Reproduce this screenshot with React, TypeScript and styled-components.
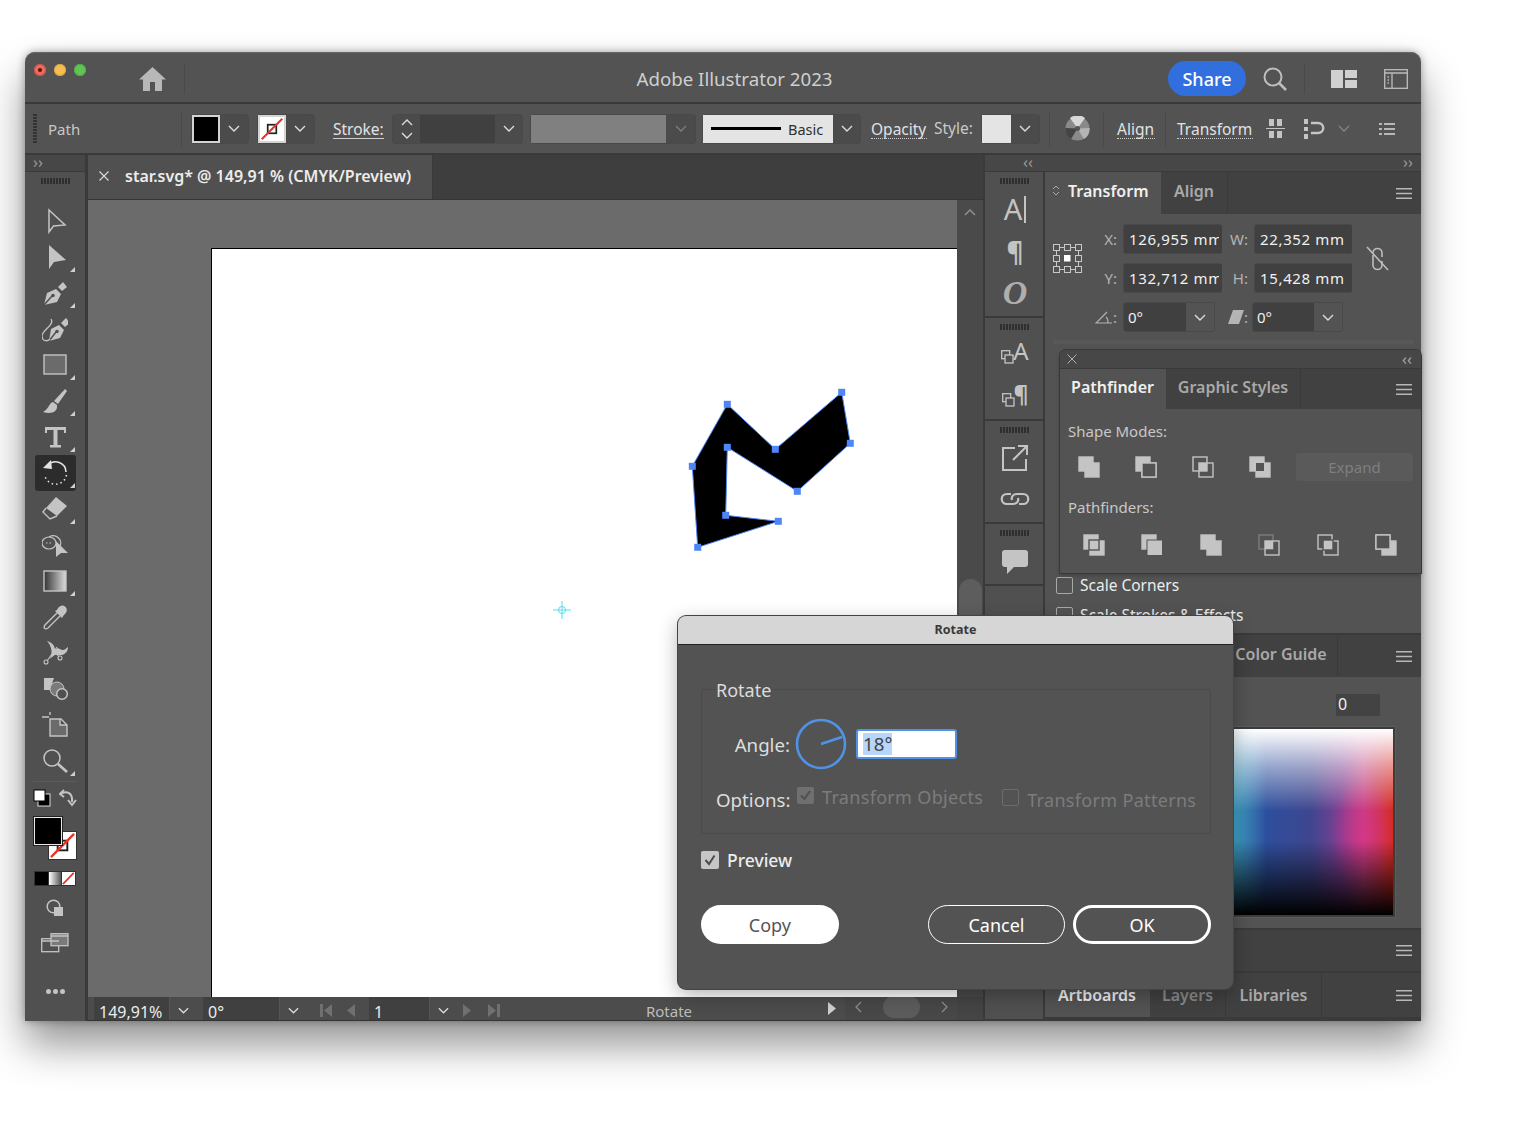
import * as React from "react";
import styled, { createGlobalStyle, css } from "styled-components";

const ICON = "#c4c4c4";
const PANEL = "#535353";
const DARK = "#414141";
const LINE = "#3a3a3a";
const FIELD = "#404040";

const GlobalStyle = createGlobalStyle`
  html, body {
    margin: 0;
    background: #fff;
    overflow: hidden;
  }
  body {
    font-family: "Noto Sans", "Open Sans", sans-serif;
    color: #e6e6e6;
  }
  * {
    box-sizing: border-box;
  }
`;

const Page = styled.div`
  width: 1523px;
  height: 1129px;
  padding: 52px 0 0 25px;
`;

const Window = styled.div`
  position: relative;
  width: 1396px;
  height: 969px;
  display: flex;
  flex-direction: column;
  background: ${PANEL};
  border-radius: 10px 10px 0 0;
  box-shadow: 0 24px 42px rgba(0, 0, 0, 0.42), 0 0 8px rgba(0, 0, 0, 0.35);
`;

const spacing = css<{ $ml?: number; $w?: number }>`
  margin-left: ${(p) => p.$ml ?? 0}px;
  ${(p) => (p.$w ? `width: ${p.$w}px;` : "")}
  flex: none;
`;

/* title bar */
const TitleBar = styled.header`
  height: 52px;
  flex: none;
  display: flex;
  align-items: center;
  padding: 3px 13px 0 9px;
  border-bottom: 2px solid ${LINE};
  border-radius: 10px 10px 0 0;
  box-shadow: inset 0 1px 0 #666;
`;

const Lights = styled.div`
  display: flex;
  gap: 8px;
  align-self: flex-start;
  margin-top: 9px;
`;

const Light = styled.span<{ $color: string; $edge: string }>`
  width: 12px;
  height: 12px;
  border-radius: 50%;
  background: ${(p) => p.$color};
  box-shadow: inset 0 0 0 1px ${(p) => p.$edge};
  display: flex;
  align-items: center;
  justify-content: center;
`;

const LightDot = styled.span`
  width: 4px;
  height: 4px;
  border-radius: 50%;
  background: #5d0f0c;
`;

const BarDivider = styled.span<{ $ml?: number; $h?: number }>`
  margin-left: ${(p) => p.$ml ?? 0}px;
  width: 1px;
  height: ${(p) => p.$h ?? 30}px;
  flex: none;
  background: #4a4a4a;
`;

const AppTitle = styled.h1`
  flex: 1;
  margin: 0;
  padding-left: 116px;
  text-align: center;
  font-size: 18.7px;
  font-weight: 400;
  color: #cfcfcf;
  white-space: nowrap;
`;

const ShareButton = styled.button`
  width: 78px;
  height: 35px;
  flex: none;
  border: 0;
  border-radius: 18px;
  background: #316fdf;
  color: #fff;
  font: 500 18px "Noto Sans", sans-serif;
  padding: 0;
`;

const IconSlot = styled.span<{ $ml?: number; $w?: number }>`
  ${spacing}
  display: flex;
  align-items: center;
  justify-content: center;
`;

/* control bar */
const ControlBar = styled.div`
  height: 51px;
  flex: none;
  display: flex;
  align-items: center;
  padding-left: 8px;
  border-bottom: 2px solid ${LINE};
  font-size: 15.5px;
`;

const Grip = styled.span`
  width: 4px;
  height: 30px;
  flex: none;
  background: repeating-linear-gradient(to bottom, #333 0 2px, transparent 2px 3px);
`;

const PathLabel = styled.span`
  margin-left: 11px;
  width: 133px;
  flex: none;
  font-size: 15px;
  color: #c8c8c8;
`;

const Combo = styled.div<{ $ml?: number; $w?: number }>`
  ${spacing}
  height: 28px;
  display: flex;
  align-items: stretch;
  background: #4b4b4b;
  box-shadow: 0 0 0 1px #494949;
  border-radius: 3px;
`;

const Swatch = styled.span`
  width: 28px;
  flex: none;
  display: flex;
  background: #000;
  border: 2px solid #d4d4d4;
`;

const Caret = styled.span<{ $w?: number; $dim?: boolean }>`
  width: ${(p) => p.$w ?? 28}px;
  flex: none;
  display: flex;
  align-items: center;
  justify-content: center;
  opacity: ${(p) => (p.$dim ? 0.35 : 1)};
`;

const Stepper = styled.span`
  width: 27px;
  flex: none;
  display: flex;
  flex-direction: column;
  align-items: center;
  justify-content: center;
  gap: 6px;
`;

const DarkInput = styled.span<{ $w: number }>`
  width: ${(p) => p.$w}px;
  flex: none;
  background: ${FIELD};
`;

const GrayFill = styled.span`
  width: 135px;
  flex: none;
  background: #808080;
`;

const StrokePreview = styled.span`
  width: 130px;
  flex: none;
  display: flex;
  align-items: center;
  gap: 7px;
  padding-left: 8px;
  background: #e4e4e4;
  color: #2f2f2f;
  font-size: 14.5px;
`;

const StrokeLine = styled.span`
  width: 70px;
  height: 3px;
  flex: none;
  background: #000;
`;

const StyleSwatch = styled.span`
  width: 29px;
  flex: none;
  background: #e4e4e4;
`;

const ControlLink = styled.span<{ $ml?: number; $w?: number; $solid?: boolean; $plain?: boolean }>`
  ${spacing}
  white-space: nowrap;
  color: #e2e2e2;
  line-height: 17px;
  margin-top: ${(p) => (p.$plain ? 0 : 3)}px;
  ${(p) =>
    p.$plain
      ? "color: #c8c8c8;"
      : `border-bottom: ${p.$solid ? "1px solid #d0d0d0" : "1px dotted #d0d0d0"};`}
`;

/* work area */
const WorkArea = styled.div`
  flex: 1;
  min-height: 0;
  display: flex;
  background: ${LINE};
`;

const ToolColumn = styled.aside`
  width: 60px;
  flex: none;
  margin-right: 3px;
  display: flex;
  flex-direction: column;
  align-items: center;
  background: #505050;
`;

const CollapseStrip = styled.div`
  align-self: stretch;
  height: 17px;
  display: flex;
  align-items: center;
  padding: 0 8px 2px;
  background: #474747;
  color: #9a9a9a;
  font-size: 16px;
  border-bottom: 1px solid ${LINE};
`;

const Knurl = styled.span<{ $mt?: number }>`
  display: block;
  width: 29px;
  height: 6px;
  margin-top: ${(p) => p.$mt ?? 6}px;
  flex: none;
  background: repeating-linear-gradient(to right, #2f2f2f 0 2px, transparent 2px 3px);
`;

const Tools = styled.div`
  margin-top: 19px;
  display: flex;
  flex-direction: column;
`;

const ToolButton = styled.div<{ $active?: boolean; $corner?: boolean }>`
  position: relative;
  width: 41px;
  height: 36px;
  display: flex;
  align-items: center;
  justify-content: center;
  border-radius: 3px;
  ${(p) => (p.$active ? "background: #2c2c2c;" : "")}
  ${(p) =>
    p.$corner
      ? `&::after {
          content: "";
          position: absolute;
          right: 1px;
          bottom: 3px;
          border-style: solid;
          border-width: 0 0 5px 5px;
          border-color: transparent transparent #d0d0d0 transparent;
        }`
      : ""}
`;

const ToolRule = styled.span`
  width: 44px;
  height: 1px;
  margin-top: 2px;
  flex: none;
  background: #5b5b5b;
`;

const SwapRow = styled.div`
  width: 44px;
  height: 20px;
  margin-top: 6px;
  display: flex;
  align-items: center;
  justify-content: space-between;
`;

const FillStroke = styled.div`
  position: relative;
  width: 43px;
  height: 43px;
  margin-top: 9px;
  flex: none;
`;

const StrokeBox = styled.span`
  position: absolute;
  right: 0;
  bottom: 0;
  width: 29px;
  height: 29px;
  display: flex;
  border: 1px solid #333;
`;

const FillBox = styled.span`
  position: absolute;
  left: 0;
  top: 0;
  width: 28px;
  height: 28px;
  background: #000;
  border: 1px solid #e8e8e8;
  box-shadow: 0 0 0 1px #222;
`;

const ModeRow = styled.div`
  width: 42px;
  height: 15px;
  margin-top: 11px;
  flex: none;
  display: flex;
  gap: 1px;
  padding: 1px;
  background: #333;
`;

const ModeCell = styled.span<{ $fill: string }>`
  flex: 1;
  display: flex;
  background: ${(p) => p.$fill};
`;

const BottomIcon = styled.span<{ $mt: number }>`
  margin-top: ${(p) => p.$mt}px;
  display: flex;
  flex: none;
`;

const Dots = styled.span`
  margin-top: 36px;
  display: flex;
  gap: 2px;
  flex: none;
`;

const Dot = styled.i`
  width: 5px;
  height: 5px;
  border-radius: 50%;
  background: ${ICON};
`;

/* document */
const DocumentArea = styled.main`
  width: 895px;
  flex: none;
  margin-right: 2px;
  display: flex;
  flex-direction: column;
`;

const DocTabs = styled.div`
  height: 45px;
  flex: none;
  display: flex;
  background: #3e3e3e;
  border-bottom: 1px solid #363636;
`;

const DocTab = styled.div`
  width: 345px;
  display: flex;
  align-items: center;
  gap: 16px;
  padding: 0 0 2px 11px;
  background: #505050;
  border-right: 1px solid #3a3a3a;
  font-size: 16px;
  font-weight: 600;
  color: #ececec;
  white-space: nowrap;
`;

const CanvasRow = styled.div`
  flex: 1;
  min-height: 0;
  display: flex;
`;

const Pasteboard = styled.div`
  flex: 1;
  display: flex;
  padding: 48px 0 0 123px;
  background: #6b6b6b;
`;

const Artboard = styled.div`
  position: relative;
  flex: 1;
  background: #fff;
  border-top: 1px solid #000;
  border-left: 1px solid #000;
`;

const ArtLayer = styled.svg`
  position: absolute;
  left: 0;
  top: -1px;
`;

const VScroll = styled.div`
  width: 26px;
  flex: none;
  display: flex;
  flex-direction: column;
  align-items: center;
  padding-top: 9px;
  background: #4a4a4a;
`;

const VThumb = styled.span`
  width: 23px;
  height: 60px;
  margin-top: 363px;
  border-radius: 12px;
  background: #5d5d5d;
`;

const StatusBar = styled.footer`
  height: 24px;
  flex: none;
  display: flex;
  align-items: stretch;
  padding-left: 6px;
  background: #4c4c4c;
  border-bottom: 1px solid #333;
  font-size: 16px;
  color: #ececec;
`;

const StatusField = styled.span<{ $w: number; $ml?: number }>`
  width: ${(p) => p.$w}px;
  margin-left: ${(p) => p.$ml ?? 0}px;
  flex: none;
  padding: 5px 0 0 5px;
  line-height: 20px;
  background: ${FIELD};
  white-space: nowrap;
`;

const StatusCaret = styled.span`
  width: 27px;
  flex: none;
  display: flex;
  align-items: center;
  justify-content: center;
  padding-top: 4px;
  border-left: 1px solid #555;
`;

const NavIcons = styled.span<{ $w: number }>`
  width: ${(p) => p.$w}px;
  flex: none;
  display: flex;
  align-items: center;
  justify-content: center;
  padding-top: 3px;
`;

const StatusLabel = styled.span`
  width: 298px;
  flex: none;
  padding: 4px 0 0 0;
  line-height: 20px;
  margin-left: 13px;
  text-align: center;
  color: #bdbdbd;
  font-size: 15px;
`;

const PlayBox = styled.span`
  width: 27px;
  flex: none;
  display: flex;
  align-items: center;
  justify-content: center;
`;

const HScroll = styled.span`
  width: 112px;
  flex: none;
  display: flex;
  align-items: center;
  justify-content: space-between;
  padding: 0 9px 4px 10px;
  background: #484848;
`;

const HThumb = styled.span`
  width: 37px;
  height: 22px;
  border-radius: 11px;
  background: #5c5c5c;
`;

const Corner = styled.span`
  flex: 1;
  background: #454545;
`;

/* right dock */
const RightDock = styled.aside`
  flex: 1;
  display: flex;
  flex-direction: column;
  min-width: 0;
`;

const DockStrip = styled.div`
  height: 17px;
  flex: none;
  display: flex;
  justify-content: space-between;
  align-items: center;
  padding: 0 8px 2px 38px;
  background: #474747;
  color: #9a9a9a;
  font-size: 16px;
  border-bottom: 1px solid ${LINE};
`;

const DockBody = styled.div`
  flex: 1;
  min-height: 0;
  display: flex;
  gap: 2px;
`;

const DockIcons = styled.div`
  width: 58px;
  flex: none;
  display: flex;
  flex-direction: column;
  background: #505050;
`;

const DockGroup = styled.div<{ $h?: number }>`
  height: ${(p) => (p.$h ? `${p.$h}px` : "auto")};
  ${(p) => (p.$h ? "" : "flex: 1;")}
  display: flex;
  flex-direction: column;
  align-items: center;
  border-bottom: 2px solid ${LINE};
`;

const DockIcon = styled.span<{ $mt: number }>`
  margin: ${(p) => p.$mt}px 0 0 2px;
  height: 30px;
  display: flex;
  align-items: center;
  justify-content: center;
  flex: none;
`;

const DockGlyph = styled.span<{ $size: number; $serif?: boolean; $bold?: boolean }>`
  font-family: ${(p) => (p.$serif ? '"Liberation Serif", serif' : '"Noto Sans", sans-serif')};
  font-size: ${(p) => p.$size}px;
  font-style: ${(p) => (p.$serif ? "italic" : "normal")};
  font-weight: ${(p) => (p.$bold ? 700 : 400)};
  line-height: 30px;
  color: ${(p) => (p.$serif ? "#aeaeae" : ICON)};
`;

const TextCursor = styled.span`
  width: 2px;
  height: 27px;
  margin-left: 2px;
  flex: none;
  background: ${ICON};
`;

const MiniSquares = styled.svg`
  margin: 11px -1px 0 0;
  flex: none;
`;

const PanelColumn = styled.div`
  flex: 1;
  min-width: 0;
  display: flex;
  flex-direction: column;
  gap: 2px;
`;

const Panel = styled.section<{ $h: number }>`
  height: ${(p) => p.$h}px;
  flex: none;
  display: flex;
  flex-direction: column;
  background: ${PANEL};
  overflow: hidden;
`;

const TabRow = styled.div<{ $h?: number }>`
  height: ${(p) => p.$h ?? 42}px;
  flex: none;
  display: flex;
  align-items: stretch;
  background: ${DARK};
`;

const Tab = styled.div<{ $active?: boolean; $w: number; $dim?: boolean; $pl?: number; $pb?: number }>`
  width: ${(p) => p.$w}px;
  flex: none;
  display: flex;
  align-items: center;
  justify-content: ${(p) => (p.$pl !== undefined ? "flex-start" : "center")};
  padding-left: ${(p) => p.$pl ?? 0}px;
  padding-bottom: ${(p) => p.$pb ?? 5}px;
  gap: 8px;
  font-size: 16px;
  font-weight: 600;
  white-space: nowrap;
  color: ${(p) => (p.$active ? "#f0f0f0" : p.$dim ? "#8c8c8c" : "#a9a9a9")};
  background: ${(p) => (p.$active ? PANEL : DARK)};
  border-right: 1px solid ${(p) => (p.$active ? "transparent" : "#3a3a3a")};
`;

const MenuSlot = styled.span`
  margin-left: auto;
  width: 25px;
  flex: none;
  display: flex;
  align-items: center;
  justify-content: flex-start;
`;

const TransformGrid = styled.div`
  display: grid;
  grid-template-columns: 29px 29px 99px 20px 98px 31px;
  grid-template-rows: 30px 30px 30px;
  column-gap: 6px;
  row-gap: 9px;
  padding: 10px 0 0 8px;
  font-size: 15px;
`;

const RefSlot = styled.span`
  grid-row: 1 / 3;
  align-self: center;
  display: flex;
`;

const LinkSlot = styled.span`
  grid-row: 1 / 3;
  grid-column: 6;
  align-self: center;
  justify-self: end;
  display: flex;
`;

const FieldLabel = styled.span`
  align-self: center;
  justify-self: end;
  color: #b4b4b4;
  display: flex;
  align-items: center;
  white-space: nowrap;
`;

const ValueField = styled.span`
  display: flex;
  align-items: center;
  padding: 0 0 0 5px;
  overflow: hidden;
  white-space: nowrap;
  background: ${FIELD};
  border: 1px solid #494949;
  border-right: 3px solid ${FIELD};
  border-radius: 3px;
  color: #f0f0f0;
  letter-spacing: 0.65px;
`;

const AngleField = styled.span<{ $w: number; $ml?: number }>`
  display: flex;
  width: ${(p) => p.$w}px;
  margin-left: ${(p) => p.$ml ?? 0}px;
  border: 1px solid #494949;
  border-radius: 3px;
  overflow: hidden;
  color: #f0f0f0;
`;

const AngleValue = styled.span`
  flex: 1;
  display: flex;
  align-items: center;
  padding-left: 4px;
  background: ${FIELD};
`;

const PanelBand = styled.div`
  height: 4px;
  margin: 8px 8px 0;
  background: #585858;
`;

const ScaleOptions = styled.div`
  margin-top: auto;
  height: 46px;
  flex: none;
  display: flex;
  flex-direction: column;
  gap: 13px;
  padding: 1px 0 0 11px;
  overflow: hidden;
  font-size: 15.5px;
`;

const TransformBody = styled.div`
  height: 408px;
  flex: none;
  display: flex;
  flex-direction: column;
`;

const CheckRow = styled.label`
  height: 17px;
  flex: none;
  display: flex;
  align-items: center;
  gap: 7px;
  line-height: 17px;
  color: #ececec;
  white-space: nowrap;
`;

const EmptyBox = styled.span`
  width: 17px;
  height: 17px;
  flex: none;
  border: 1px solid #a8a8a8;
  border-radius: 2px;
`;

/* pathfinder */
const Floating = styled.section`
  position: absolute;
  left: 1035px;
  top: 298px;
  width: 361px;
  height: 223px;
  display: flex;
  flex-direction: column;
  background: ${PANEL};
  border-radius: 6px 6px 0 0;
  box-shadow: 0 0 0 1px #383838, 0 2px 4px rgba(0, 0, 0, 0.25);
`;

const FloatHead = styled.div`
  height: 19px;
  flex: none;
  display: flex;
  align-items: center;
  justify-content: space-between;
  padding: 0 9px 0 7px;
  color: #a6a6a6;
  font-size: 16px;
  background: #474747;
  border-radius: 6px 6px 0 0;
  border-bottom: 1px solid ${LINE};
`;

const SectionLabel = styled.div<{ $mt: number }>`
  margin: ${(p) => p.$mt}px 0 0 8px;
  height: 20px;
  line-height: 20px;
  font-size: 15px;
  color: #c8c8c8;
`;

const ModeIcons = styled.div`
  margin-top: 12px;
  height: 28px;
  display: flex;
  align-items: center;
  padding: 0 8px 0 18px;
`;

const ModeGroup = styled.div`
  display: flex;
  gap: 35px;
`;

const ExpandButton = styled.span`
  margin-left: auto;
  width: 117px;
  height: 28px;
  display: flex;
  align-items: center;
  justify-content: center;
  border-radius: 3px;
  background: #5a5a5a;
  color: #7f7f7f;
  font-size: 15px;
`;

const FinderIcons = styled.div`
  margin-top: 17px;
  display: flex;
  padding-left: 23px;
  gap: 36.4px;
`;

/* colour panel */
const ColorBody = styled.div`
  flex: 1;
  position: relative;
  display: flex;
  flex-direction: column;
  align-items: flex-end;
  padding: 17px 26px 0 0;
`;

const ZeroField = styled.span`
  width: 44px;
  height: 22px;
  margin-right: 15px;
  padding: 0 0 3px 2px;
  display: flex;
  align-items: center;
  background: #434343;
  font-size: 16px;
  color: #f0f0f0;
`;

const Spectrum = styled.div`
  width: 190px;
  height: 190px;
  margin-top: 11px;
  flex: none;
  border: 2px solid #3c3c3c;
  outline: 1px solid #5c5c5c;
  background:
    linear-gradient(to bottom, #fff 0%, rgba(255, 255, 255, 0.5) 20%, rgba(255, 255, 255, 0) 44%, rgba(0, 0, 0, 0) 60%, #000 100%),
    radial-gradient(ellipse 34px 56px at 84% 56%, rgba(224, 48, 140, 0.65), transparent),
    linear-gradient(to right, #3fa8c8 13%, #2d4f9d 32%, #40468f 56%, #7c3f92 72%, #c0417f 84%, #d62a1c 100%);
`;

/* dialog */
const Dialog = styled.section`
  position: absolute;
  left: 653px;
  top: 564px;
  width: 555px;
  height: 373px;
  display: flex;
  flex-direction: column;
  background: ${PANEL};
  border-radius: 8px;
  box-shadow: 0 0 0 1px #444, 0 6px 20px rgba(0, 0, 0, 0.3);
`;

const DialogTitle = styled.header`
  height: 29px;
  flex: none;
  display: flex;
  align-items: center;
  justify-content: center;
  padding-bottom: 2px;
  background: #d6d6d6;
  border-radius: 8px 8px 0 0;
  border-bottom: 1px solid #222;
  color: #3a3a3a;
  font-size: 12.5px;
  font-weight: 700;
`;

const DialogBody = styled.div`
  flex: 1;
  display: flex;
  flex-direction: column;
  padding: 33px 22px 0 23px;
`;

const Fieldset = styled.fieldset`
  margin: 0;
  padding: 0 0 0 14px;
  height: 156px;
  flex: none;
  border: 1px solid #4b4b4b;
  border-radius: 3px;
`;

const Legend = styled.legend`
  padding: 2px 0 0 0;
  margin-left: 0;
  font-size: 18px;
  line-height: 20px;
  color: #dcdcdc;
`;

const AngleRow = styled.div`
  margin-top: 18px;
  height: 52px;
  display: flex;
  align-items: center;
  font-size: 18.7px;
`;

const DialLabel = styled.span`
  width: 74px;
  flex: none;
  text-align: right;
  color: #dedede;
`;

const Dial = styled.svg`
  margin-left: 5px;
  flex: none;
`;

const AngleInput = styled.span`
  margin-left: 9px;
  width: 101px;
  height: 30px;
  display: flex;
  align-items: center;
  padding-left: 5px;
  background: #fff;
  border: 2px solid #5092e6;
  border-radius: 3px;
  color: #444;
`;

const Selected = styled.span`
  background: #b7d6fb;
  line-height: 22px;
`;

const OptionsRow = styled.div`
  margin-top: 11px;
  height: 36px;
  display: flex;
  align-items: center;
  font-size: 18.7px;
  white-space: nowrap;
`;

const DisabledCheck = styled.span<{ $on?: boolean; $ml: number; $mt: number }>`
  margin-left: ${(p) => p.$ml}px;
  margin-top: ${(p) => p.$mt}px;
  width: 17px;
  height: 17px;
  flex: none;
  display: flex;
  border-radius: 2px;
  ${(p) => (p.$on ? "background: #6f6f6f;" : "border: 1px solid #6d6d6d;")}
`;

const DisabledText = styled.span<{ $mt: number }>`
  margin-left: 8px;
  margin-top: ${(p) => p.$mt}px;
  font-size: 18px;
  color: #7c7c7c;
  letter-spacing: 0.32px;
`;

const PreviewRow = styled.div`
  margin-top: 16px;
  height: 20px;
  flex: none;
  display: flex;
  align-items: center;
  gap: 8px;
  font-size: 17.5px;
  font-weight: 500;
  color: #ececec;
`;

const PreviewBox = styled.span`
  width: 18px;
  height: 18px;
  flex: none;
  display: flex;
  border-radius: 2px;
  background: #c6c6c6;
`;

const DialogActions = styled.div`
  margin-top: 35px;
  display: flex;
  gap: 8px;
`;

const PillButton = styled.button<{ $kind: "fill" | "line" | "primary"; $ml?: number }>`
  width: 138px;
  height: 39px;
  margin-left: ${(p) => p.$ml ?? 0}px;
  padding: 0;
  border-radius: 20px;
  font: 400 18px "Noto Sans", sans-serif;
  background: ${(p) => (p.$kind === "fill" ? "#fff" : "transparent")};
  color: ${(p) => (p.$kind === "fill" ? "#555" : "#fff")};
  border: ${(p) => (p.$kind === "fill" ? "0" : p.$kind === "line" ? "1.5px solid #fff" : "3px solid #fff")};
`;

/* icons */
const Chevron = ({ up, size = 12 }: { up?: boolean; size?: number }) => (
  <svg width={size} height={7} viewBox="0 0 12 7" fill="none">
    <path d={up ? "M1 6L6 1L11 6" : "M1 1L6 6L11 1"} stroke="#dcdcdc" strokeWidth="1.4" />
  </svg>
);

const MenuIcon = () => (
  <svg width="16" height="11" viewBox="0 0 16 11">
    <path d="M0 .75H16M0 5.5H16M0 10.25H16" stroke="#b8b8b8" strokeWidth="1.4" />
  </svg>
);

const NoneSlash = ({ small }: { small?: boolean }) => (
  <svg width="100%" height="100%" viewBox="0 0 28 28" preserveAspectRatio="none">
    <rect width="28" height="28" fill="#fff" />
    {!small && <rect x="9" y="9" width="10" height="10" fill="none" stroke="#222" strokeWidth="2" />}
    <path d="M2 26L26 2" stroke="#e8332a" strokeWidth={small ? 4 : 2.4} />
  </svg>
);

const Tool = ({ children }: { children: React.ReactNode }) => (
  <svg width="26" height="26" viewBox="-1 -1 26 26">
    {children}
  </svg>
);

const Squares = () => (
  <MiniSquares width="13" height="14" viewBox="0 0 13 14">
    <rect x=".7" y=".7" width="8" height="8" fill="none" stroke={ICON} strokeWidth="1.3" />
    <rect x="4" y="5" width="8" height="8" fill="#505050" stroke={ICON} strokeWidth="1.3" />
  </MiniSquares>
);

const nib = "M0 24L3 12L12 8L17 13L13 21Z";

const toolIcons: { corner?: boolean; active?: boolean; icon: React.ReactNode }[] = [
  { icon: <path d="M6 1L22 16L10.5 17L6 23Z" fill="none" stroke={ICON} strokeWidth="1.5" /> },
  { corner: true, icon: <path d="M6 0L23 15L11 17L6 24Z" fill={ICON} /> },
  {
    corner: true,
    icon: (
      <g fill={ICON}>
        <path d={nib} transform="translate(1 0)" />
        <path d="M15 6L20 1L24 6L19 10Z" />
        <path d="M1 24L9 15" stroke="#505050" strokeWidth="1.5" />
        <circle cx="10" cy="14.5" r="1.8" fill="#505050" />
      </g>
    ),
  },
  {
    icon: (
      <g fill={ICON}>
        <path d="M6 24L8 12L16 8L21 13L17 21Z" />
        <path d="M18 6L23 1L27 6L22 10Z" />
        <path d="M6 24L13 15" stroke="#505050" strokeWidth="1.5" />
        <circle cx="14" cy="14.5" r="1.8" fill="#505050" />
        <path d="M8 2C12 8 -1 13 -1 19C-1 24 4 25 7 22" fill="none" stroke={ICON} strokeWidth="1.3" />
      </g>
    ),
  },
  { corner: true, icon: <rect x="1" y="2" width="22" height="19" fill="#6b6b6b" stroke={ICON} strokeWidth="1.4" /> },
  {
    corner: true,
    icon: (
      <g fill={ICON}>
        <path d="M22 0L24 2L15 15L11 12Z" />
        <path d="M10 13C6 14 6 20 0 23C7 25 15 24 14 16Z" />
      </g>
    ),
  },
  { corner: true, icon: <path d="M2 2H23V8H21V5H14.5V20H18V22.5H7V20H10.5V5H4V8H2Z" fill={ICON} /> },
  {
    corner: true,
    active: true,
    icon: (
      <g fill="none" stroke="#e2e2e2">
        <path d="M5 4A10.5 10.5 0 0 1 23 11" strokeWidth="1.6" />
        <path d="M0 7L8 -1L9 8Z" fill="#e2e2e2" stroke="none" />
        <path d="M23.5 14A11 11 0 0 1 2 15" strokeWidth="1.6" strokeDasharray="1.5 3" />
      </g>
    ),
  },
  {
    corner: true,
    icon: (
      <g>
        <path d="M13 0L24 9L14 19L3 11Z" fill={ICON} />
        <path d="M3 11L0 15L7 22L14 19" fill="none" stroke={ICON} strokeWidth="1.4" />
      </g>
    ),
  },
  {
    icon: (
      <g fill="none" stroke={ICON} strokeWidth="1.2">
        <ellipse cx="6" cy="10" rx="7" ry="6" />
        <path d="M6 4C13 0 20 7 17 13" />
        <path d="M13 8L13 24L18 20L25 20Z" fill={ICON} stroke="none" />
        <path d="M3 10H10" strokeDasharray="1.5 2" />
      </g>
    ),
  },
  {
    corner: true,
    icon: (
      <g>
        <defs>
          <linearGradient id="toolGrad">
            <stop offset="0" stopColor="#333" />
            <stop offset="1" stopColor="#ddd" />
          </linearGradient>
        </defs>
        <rect x="1" y="2" width="22" height="20" fill="url(#toolGrad)" stroke={ICON} strokeWidth="1.4" />
      </g>
    ),
  },
  {
    icon: (
      <g>
        <path d="M14 8L2 20C0 23 2 25 5 23L17 11" fill="none" stroke={ICON} strokeWidth="1.4" />
        <path d="M12 6L19 13L20.5 10.5L22 9C25 6 24 2 21 1C19 0 17 1 15 3L14 5Z" fill={ICON} />
      </g>
    ),
  },
  {
    icon: (
      <g>
        <path
          d="M4 0C8 1 12 4 12 9C15 5 17 9 20 9C22 9 23 7 25 6C25 12 20 15 15 14C12 13 10 15 7 18C9 13 10 7 4 0Z"
          fill={ICON}
        />
        <g fill="none" stroke={ICON} strokeWidth="1.1">
          <path d="M9 7L16 16M14 6L4 20" />
          <circle cx="3" cy="21" r="2" />
          <circle cx="17" cy="17" r="2" />
        </g>
      </g>
    ),
  },
  {
    icon: (
      <g>
        <path d="M1 1H11C9 6 8 9 8 13H1Z" fill={ICON} />
        <circle cx="14" cy="12" r="7" fill="#7a7a7a" stroke={ICON} strokeWidth="1" />
        <circle cx="19" cy="17" r="5.3" fill="#505050" stroke={ICON} strokeWidth="1.5" />
      </g>
    ),
  },
  {
    icon: (
      <g stroke={ICON} strokeWidth="1.4">
        <path d="M7 7H18L24 13V24H7ZM17 7V13H24" fill="#6b6b6b" transform="translate(0 -1)" />
        <path d="M-1 4H6M7 -2V2" fill="none" />
      </g>
    ),
  },
  {
    corner: true,
    icon: (
      <g fill="none" stroke={ICON}>
        <circle cx="9" cy="9" r="8" strokeWidth="1.5" />
        <path d="M15 15L24 23" strokeWidth="2.6" />
      </g>
    ),
  },
];

type Part = "fill" | "line" | "dim";

const SquarePair = ({
  back,
  front,
  mid,
}: {
  back: Part;
  front: Part;
  mid?: "fill" | "bg" | "line" | "bgline" | "edge" | "topback";
}) => {
  const paint = (part: Part) =>
    part === "fill"
      ? { fill: ICON, stroke: ICON }
      : part === "dim"
        ? { fill: "none", stroke: "#7d7d7d" }
        : { fill: "none", stroke: ICON };
  return (
    <svg width="22" height="22" viewBox="0 0 22 22" strokeWidth="1.4" style={{ flex: "none" }}>
      <rect x="1" y="1" width="14" height="14" {...paint(back)} />
      <rect x="7" y="7" width="14" height="14" {...paint(front)} />
      {mid === "fill" && <rect x="7" y="7" width="8" height="8" fill={ICON} />}
      {mid === "bg" && <rect x="7" y="7" width="8" height="8" fill={PANEL} />}
      {mid === "line" && <rect x="6" y="6" width="10" height="10" fill={ICON} stroke={PANEL} />}
      {mid === "bgline" && <rect x="7" y="7" width="14" height="14" fill={PANEL} stroke={ICON} />}
      {mid === "edge" && <rect x="6" y="6" width="15.500" height="15.500" fill={ICON} stroke={PANEL} strokeWidth="1" />}
      {mid === "topback" && <rect x="1" y="1" width="14" height="14" fill={PANEL} stroke={ICON} />}
    </svg>
  );
};

const AnchorPoints = [
  [841.7, 392.3],
  [850.3, 443.3],
  [797.3, 491.3],
  [727.3, 447.3],
  [725.7, 515.3],
  [778.3, 521.3],
  [697.7, 547.3],
  [692.3, 466.3],
  [727.3, 404.3],
  [775.3, 449.3],
];

const pathShape = AnchorPoints.map((p) => p.join(",")).join(" ");

const App: React.FunctionComponent = (): JSX.Element => {
  return (
    <Page>
      <GlobalStyle />
      <Window>
        <TitleBar>
          <Lights>
            <Light $color="#ec6a5e" $edge="#d0524a">
              <LightDot />
            </Light>
            <Light $color="#f4bf4f" $edge="#d6a243" />
            <Light $color="#61c554" $edge="#52a847" />
          </Lights>
          <IconSlot $ml={53} $w={27}>
            <svg width="27" height="24" viewBox="0 0 27 24">
              <path d="M13.5 0L27 12.5H23V24H16V15H11V24H4V12.5H0Z" fill="#b8b8b8" />
            </svg>
          </IconSlot>
          <BarDivider $ml={18} />
          <AppTitle>Adobe Illustrator 2023</AppTitle>
          <ShareButton>Share</ShareButton>
          <IconSlot $ml={17} $w={24}>
            <svg width="24" height="24" viewBox="0 0 24 24" fill="none" stroke="#bdbdbd">
              <circle cx="10" cy="10" r="8.5" strokeWidth="2" />
              <path d="M16 16L23 23" strokeWidth="2.6" />
            </svg>
          </IconSlot>
          <BarDivider $ml={17} />
          <IconSlot $ml={26} $w={26}>
            <svg width="26" height="18" viewBox="0 0 26 18" fill="#d0d0d0">
              <path d="M0 0H12V18H0ZM14 0H26V8H14ZM14 10H26V18H14Z" />
            </svg>
          </IconSlot>
          <IconSlot $ml={27} $w={24}>
            <svg width="24" height="20" viewBox="0 0 24 20" fill="none" stroke="#bdbdbd" strokeWidth="1.3">
              <rect x=".7" y=".7" width="22.6" height="18.6" />
              <path d="M1 4H23M8 4V19" />
              <path d="M3.5 8H5M3.5 11H5M3.5 14H5" strokeWidth="1.5" />
            </svg>
          </IconSlot>
        </TitleBar>

        <ControlBar>
          <Grip />
          <PathLabel>Path</PathLabel>
          <BarDivider $h={36} />
          <Combo $ml={10} $w={56}>
            <Swatch />
            <Caret>
              <Chevron />
            </Caret>
          </Combo>
          <Combo $ml={10} $w={56}>
            <Swatch>
              <NoneSlash />
            </Swatch>
            <Caret>
              <Chevron />
            </Caret>
          </Combo>
          <ControlLink $ml={19} $w={51} $solid>
            Stroke:
          </ControlLink>
          <Combo $ml={9} $w={129}>
            <Stepper>
              <Chevron up />
              <Chevron />
            </Stepper>
            <DarkInput $w={75} />
            <Caret $w={27}>
              <Chevron />
            </Caret>
          </Combo>
          <Combo $ml={9} $w={164}>
            <GrayFill />
            <Caret $w={29} $dim>
              <Chevron />
            </Caret>
          </Combo>
          <Combo $ml={8} $w={157}>
            <StrokePreview>
              <StrokeLine />
              Basic
            </StrokePreview>
            <Caret $w={27}>
              <Chevron />
            </Caret>
          </Combo>
          <ControlLink $ml={11} $w={56}>
            Opacity
          </ControlLink>
          <ControlLink $ml={7} $w={39} $plain>
            Style:
          </ControlLink>
          <Combo $ml={9} $w={57}>
            <StyleSwatch />
            <Caret>
              <Chevron />
            </Caret>
          </Combo>
          <BarDivider $ml={10} $h={36} />
          <IconSlot $ml={15} $w={25}>
            <svg width="25" height="25" viewBox="0 0 25 25">
              <circle cx="12.5" cy="12.5" r="12" fill="#8a8a8a" />
              <path d="M12.5 12.5L5 2A12 12 0 0 1 20 2Z" fill="#d8d8d8" />
              <path d="M12.5 12.5L24.5 12A12 12 0 0 1 19 23Z" fill="#b4b4b4" />
              <path d="M12.5 12.5L6 23A12 12 0 0 1 .5 12Z" fill="#444" />
              <circle cx="12.5" cy="12.5" r="2.5" fill="#535353" />
            </svg>
          </IconSlot>
          <BarDivider $ml={13} $h={36} />
          <ControlLink $ml={13} $w={38}>
            Align
          </ControlLink>
          <BarDivider $ml={10} $h={36} />
          <ControlLink $ml={11} $w={76}>
            Transform
          </ControlLink>
          <IconSlot $ml={13} $w={19}>
            <svg width="19" height="19" viewBox="0 0 19 19" fill="#c4c4c4">
              <path d="M3 0H8V7H3ZM11 0H16V7H11ZM3 12H8V19H3ZM11 12H16V19H11ZM0 9H19V10H0Z" />
            </svg>
          </IconSlot>
          <IconSlot $ml={19} $w={22}>
            <svg width="22" height="20" viewBox="0 0 22 20" fill="#c4c4c4">
              <path d="M0 0H4V5H0ZM0 8H4V12H0ZM0 15H4V20H0Z" />
              <path d="M7 4H14C21 4 21 14 14 14H7" fill="none" stroke="#c4c4c4" strokeWidth="2.4" />
            </svg>
          </IconSlot>
          <IconSlot $ml={12} $w={12}>
            <svg width="12" height="7" viewBox="0 0 12 7" fill="none">
              <path d="M1 1L6 6L11 1" stroke="#858585" strokeWidth="1.3" />
            </svg>
          </IconSlot>
          <IconSlot $ml={29} $w={16}>
            <svg width="16" height="12" viewBox="0 0 16 12" fill="#b8b8b8">
              <path d="M0 0H3V2H0ZM5 0H16V2H5ZM0 5H3V7H0ZM5 5H16V7H5ZM0 10H3V12H0ZM5 10H16V12H5Z" />
            </svg>
          </IconSlot>
        </ControlBar>

        <WorkArea>
          <ToolColumn>
            <CollapseStrip>››</CollapseStrip>
            <Knurl />
            <Tools>
              {toolIcons.map((tool, i) => (
                <ToolButton key={i} $active={tool.active} $corner={tool.corner}>
                  <Tool>{tool.icon}</Tool>
                </ToolButton>
              ))}
            </Tools>
            <ToolRule />
            <SwapRow>
              <svg width="18" height="18" viewBox="0 0 18 18">
                <rect x="5" y="5" width="12" height="12" fill="#000" stroke="#ddd" />
                <rect x="1" y="1" width="11" height="11" fill="#fff" stroke="#000" />
              </svg>
              <svg width="18" height="18" viewBox="0 0 18 18" fill="none" stroke={ICON} strokeWidth="2">
                <path d="M1 5C8 1 14 4 13 13" />
                <path d="M9 11L13 16L17 11" />
                <path d="M5 1L1 5L5 8" />
              </svg>
            </SwapRow>
            <FillStroke>
              <StrokeBox>
                <NoneSlash />
              </StrokeBox>
              <FillBox />
            </FillStroke>
            <ModeRow>
              <ModeCell $fill="#000" />
              <ModeCell $fill="linear-gradient(to right, #fff, #555)" />
              <ModeCell $fill="#fff">
                <NoneSlash small />
              </ModeCell>
            </ModeRow>
            <BottomIcon $mt={13}>
              <svg width="18" height="18" viewBox="0 0 18 18">
                <circle cx="7.5" cy="7.5" r="6.3" fill="none" stroke={ICON} strokeWidth="1.5" />
                <rect x="8" y="8" width="9" height="9" fill={ICON} />
              </svg>
            </BottomIcon>
            <BottomIcon $mt={16}>
              <svg width="28" height="20" viewBox="0 0 28 20">
                <rect x=".7" y="5.7" width="17" height="13" fill="#505050" stroke={ICON} strokeWidth="1.3" />
                <rect x="10" y=".7" width="17" height="12" fill="#7a7a7a" stroke={ICON} strokeWidth="1.3" />
                <path d="M1 8H18M10 3H27" stroke={ICON} strokeWidth="1.3" />
              </svg>
            </BottomIcon>
            <Dots>
              <Dot />
              <Dot />
              <Dot />
            </Dots>
          </ToolColumn>

          <DocumentArea>
            <DocTabs>
              <DocTab>
                <svg width="10" height="10" viewBox="0 0 10 10">
                  <path d="M.5 .5L9.5 9.5M9.5 .5L.5 9.5" stroke="#dcdcdc" strokeWidth="1.1" />
                </svg>
                star.svg* @ 149,91 % (CMYK/Preview)
              </DocTab>
            </DocTabs>
            <CanvasRow>
              <Pasteboard>
                <Artboard>
                  <ArtLayer width="745" height="749" viewBox="212 248 745 749">
                    <polygon points={pathShape} fill="#000" stroke="#4f86f7" strokeWidth="1" />
                    {AnchorPoints.map(([x, y]) => (
                      <rect key={`${x}-${y}`} x={x - 3.5} y={y - 3.5} width="7" height="7" fill="#4f86f7" />
                    ))}
                    <g stroke="#58dcea" strokeWidth="1" fill="none">
                      <path d="M562 601V619M553 610H571" />
                      <circle cx="562" cy="610" r="3.5" />
                    </g>
                  </ArtLayer>
                </Artboard>
              </Pasteboard>
              <VScroll>
                <svg width="12" height="7" viewBox="0 0 12 7" fill="none">
                  <path d="M1 6L6 1L11 6" stroke="#8f8f8f" strokeWidth="1.5" />
                </svg>
                <VThumb />
              </VScroll>
            </CanvasRow>
            <StatusBar>
              <StatusField $w={75}>149,91%</StatusField>
              <StatusCaret>
                <Chevron size={11} />
              </StatusCaret>
              <StatusField $w={76} $ml={7}>
                0°
              </StatusField>
              <StatusCaret>
                <Chevron size={11} />
              </StatusCaret>
              <NavIcons $w={63}>
                <svg width="36" height="13" viewBox="0 0 36 13" fill="#707070">
                  <path d="M0 0H3V13H0ZM12 0V13L4 6.5ZM35 0V13L27 6.5Z" />
                </svg>
              </NavIcons>
              <StatusField $w={60}>1</StatusField>
              <StatusCaret>
                <Chevron size={11} />
              </StatusCaret>
              <NavIcons $w={51}>
                <svg width="38" height="13" viewBox="0 0 38 13" fill="#707070">
                  <path d="M0 0V13L8 6.5ZM25 0V13L33 6.5ZM34 0H37V13H34Z" />
                </svg>
              </NavIcons>
              <StatusLabel>Rotate</StatusLabel>
              <PlayBox>
                <svg width="8" height="13" viewBox="0 0 8 13" fill="#d0d0d0">
                  <path d="M0 0L8 6.5L0 13Z" />
                </svg>
              </PlayBox>
              <HScroll>
                <svg width="7" height="12" viewBox="0 0 7 12" fill="none">
                  <path d="M6 1L1 6L6 11" stroke="#909090" strokeWidth="1.2" />
                </svg>
                <HThumb />
                <svg width="7" height="12" viewBox="0 0 7 12" fill="none">
                  <path d="M1 1L6 6L1 11" stroke="#909090" strokeWidth="1.2" />
                </svg>
              </HScroll>
              <Corner />
            </StatusBar>
          </DocumentArea>

          <RightDock>
            <DockStrip>
              <span>‹‹</span>
              <span>››</span>
            </DockStrip>
            <DockBody>
              <DockIcons>
                <DockGroup $h={146}>
                  <Knurl />
                  <DockIcon $mt={10}>
                    <DockGlyph $size={29}>A</DockGlyph>
                    <TextCursor />
                  </DockIcon>
                  <DockIcon $mt={13}>
                    <DockGlyph $size={26} $bold>
                      ¶
                    </DockGlyph>
                  </DockIcon>
                  <DockIcon $mt={11}>
                    <DockGlyph $size={34} $serif $bold>
                      O
                    </DockGlyph>
                  </DockIcon>
                </DockGroup>
                <DockGroup $h={103}>
                  <Knurl />
                  <DockIcon $mt={6}>
                    <Squares />
                    <DockGlyph $size={24}>A</DockGlyph>
                  </DockIcon>
                  <DockIcon $mt={13}>
                    <Squares />
                    <DockGlyph $size={23} $bold>
                      ¶
                    </DockGlyph>
                  </DockIcon>
                </DockGroup>
                <DockGroup $h={103}>
                  <Knurl />
                  <DockIcon $mt={10}>
                    <svg width="28" height="28" viewBox="0 0 28 28" fill="none" stroke={ICON} strokeWidth="2">
                      <path d="M14 4H2V26H25V15" />
                      <path d="M12 16L25 3M17 2H26V11" />
                    </svg>
                  </DockIcon>
                  <DockIcon $mt={11}>
                    <svg width="30" height="14" viewBox="0 0 30 14" fill="none" stroke={ICON} strokeWidth="2.2">
                      <path d="M11 2H7C0 2 0 12 7 12H13C17 12 19 9 18 6" />
                      <path d="M19 12H23C30 12 30 2 23 2H17C13 2 11 5 12 8" />
                    </svg>
                  </DockIcon>
                </DockGroup>
                <DockGroup $h={62}>
                  <Knurl />
                  <DockIcon $mt={12}>
                    <svg width="26" height="26" viewBox="0 0 26 26" fill={ICON}>
                      <path d="M3 0H23C25 0 26 1 26 3V14C26 16 25 17 23 17H12L5 24V17H3C1 17 0 16 0 14V3C0 1 1 0 3 0Z" />
                    </svg>
                  </DockIcon>
                </DockGroup>
                <DockGroup />
              </DockIcons>

              <PanelColumn>
                <Panel $h={461}>
                  <TabRow>
                    <Tab $active $w={116} $pl={7}>
                      <svg width="8" height="11" viewBox="0 0 8 11" fill="none">
                        <path d="M1 4L4 1L7 4M1 7L4 10L7 7" stroke="#aaa" />
                      </svg>
                      Transform
                    </Tab>
                    <Tab $w={67}>Align</Tab>
                    <MenuSlot>
                      <MenuIcon />
                    </MenuSlot>
                  </TabRow>
                  <TransformBody>
                    <TransformGrid>
                      <RefSlot>
                        <svg width="29" height="29" viewBox="0 0 29 29" fill="none" stroke="#c8c8c8">
                          <rect x="3.5" y="3.5" width="22" height="22" />
                          {[0, 11, 22].flatMap((y) =>
                            [0, 11, 22].map((x) =>
                              x === 11 && y === 11 ? (
                                <rect key="mid" x="11" y="11" width="6.5" height="6.5" fill="#fff" stroke="none" />
                              ) : (
                                <rect key={`${x}${y}`} x={x + 0.5} y={y + 0.5} width="6" height="6" fill={PANEL} />
                              ),
                            ),
                          )}
                        </svg>
                      </RefSlot>
                      <FieldLabel>X:</FieldLabel>
                      <ValueField>126,955 mm</ValueField>
                      <FieldLabel>W:</FieldLabel>
                      <ValueField>22,352 mm</ValueField>
                      <LinkSlot>
                        <svg width="23" height="26" viewBox="0 0 23 26" fill="none" stroke="#bdbdbd" strokeWidth="1.6">
                          <path d="M1 1L22 24" />
                          <path d="M7 9V19C7 25 16 25 16 19V15M16 11V7C16 1 7 1 7 7" />
                        </svg>
                      </LinkSlot>
                      <FieldLabel>Y:</FieldLabel>
                      <ValueField>132,712 mm</ValueField>
                      <FieldLabel>H:</FieldLabel>
                      <ValueField>15,428 mm</ValueField>
                      <span />
                      <FieldLabel>
                        <svg width="18" height="14" viewBox="0 0 18 14" fill="none" stroke="#b4b4b4" strokeWidth="1.2">
                          <path d="M17 13H1L12 2M11 7C12.5 8 13 10.500 13 13" />
                        </svg>
                        :
                      </FieldLabel>
                      <AngleField $w={92}>
                        <AngleValue>0°</AngleValue>
                        <Caret>
                          <Chevron />
                        </Caret>
                      </AngleField>
                      <FieldLabel>
                        <svg width="16" height="14" viewBox="0 0 16 14" fill="#b4b4b4">
                          <path d="M5 0H16L11 14H0Z" />
                        </svg>
                        :
                      </FieldLabel>
                      <AngleField $w={91} $ml={-2}>
                        <AngleValue>0°</AngleValue>
                        <Caret>
                          <Chevron />
                        </Caret>
                      </AngleField>
                    </TransformGrid>
                    <PanelBand />
                    <ScaleOptions>
                      <CheckRow>
                        <EmptyBox />
                        Scale Corners
                      </CheckRow>
                      <CheckRow>
                        <EmptyBox />
                        Scale Strokes &amp; Effects
                      </CheckRow>
                    </ScaleOptions>
                  </TransformBody>
                </Panel>

                <Panel $h={293}>
                  <TabRow>
                    <Tab $w={180} />
                    <Tab $w={113}>Color Guide</Tab>
                    <MenuSlot>
                      <MenuIcon />
                    </MenuSlot>
                  </TabRow>
                  <ColorBody>
                    <ZeroField>0</ZeroField>
                    <Spectrum />
                  </ColorBody>
                </Panel>

                <Panel $h={41}>
                  <TabRow $h={41}>
                    <MenuSlot>
                      <MenuIcon />
                    </MenuSlot>
                  </TabRow>
                </Panel>

                <Panel $h={44}>
                  <TabRow $h={44}>
                    <Tab $active $w={105} $pb={1}>
                      Artboards
                    </Tab>
                    <Tab $w={76} $dim $pb={1}>
                      Layers
                    </Tab>
                    <Tab $w={96} $pb={1}>
                      Libraries
                    </Tab>
                    <MenuSlot>
                      <MenuIcon />
                    </MenuSlot>
                  </TabRow>
                </Panel>
              </PanelColumn>
            </DockBody>
          </RightDock>
        </WorkArea>

        <Floating>
          <FloatHead>
            <svg width="10" height="10" viewBox="0 0 10 10">
              <path d="M.5 .5L9.5 9.5M9.5 .5L.5 9.5" stroke="#b0b0b0" strokeWidth="1" />
            </svg>
            <span>‹‹</span>
          </FloatHead>
          <TabRow $h={40}>
            <Tab $active $w={106}>
              Pathfinder
            </Tab>
            <Tab $w={135}>Graphic Styles</Tab>
            <MenuSlot>
              <MenuIcon />
            </MenuSlot>
          </TabRow>
          <SectionLabel $mt={12}>Shape Modes:</SectionLabel>
          <ModeIcons>
            <ModeGroup>
              <SquarePair back="fill" front="fill" />
              <SquarePair back="fill" front="line" mid="bgline" />
              <SquarePair back="line" front="line" mid="fill" />
              <SquarePair back="fill" front="fill" mid="bg" />
            </ModeGroup>
            <ExpandButton>Expand</ExpandButton>
          </ModeIcons>
          <SectionLabel $mt={16}>Pathfinders:</SectionLabel>
          <FinderIcons>
            <SquarePair back="fill" front="fill" mid="line" />
            <SquarePair back="fill" front="fill" mid="edge" />
            <SquarePair back="fill" front="fill" />
            <SquarePair back="dim" front="line" mid="fill" />
            <SquarePair back="line" front="line" mid="line" />
            <SquarePair back="line" front="fill" mid="topback" />
          </FinderIcons>
        </Floating>

        <Dialog>
          <DialogTitle>Rotate</DialogTitle>
          <DialogBody>
            <Fieldset>
              <Legend>Rotate</Legend>
              <AngleRow>
                <DialLabel>Angle:</DialLabel>
                <Dial width="52" height="52" viewBox="0 0 52 52" fill="none" stroke="#5092e6">
                  <circle cx="26" cy="26" r="24" strokeWidth="2.6" />
                  <path d="M26 26L47 19" strokeWidth="2.6" />
                </Dial>
                <AngleInput>
                  <Selected>18°</Selected>
                </AngleInput>
              </AngleRow>
              <OptionsRow>
                <DialLabel>Options:</DialLabel>
                <DisabledCheck $on $ml={7} $mt={-8}>
                  <svg width="17" height="17" viewBox="0 0 17 17" fill="none">
                    <path d="M4 8.500L7.500 12L13 4" stroke="#505050" strokeWidth="2" />
                  </svg>
                </DisabledCheck>
                <DisabledText $mt={-4}>Transform Objects</DisabledText>
                <DisabledCheck $ml={19} $mt={-4} />
                <DisabledText $mt={2}>Transform Patterns</DisabledText>
              </OptionsRow>
            </Fieldset>
            <PreviewRow>
              <PreviewBox>
                <svg width="18" height="18" viewBox="0 0 18 18" fill="none">
                  <path d="M4.500 9L8 13L13.500 4.500" stroke="#4c4c4c" strokeWidth="2" />
                </svg>
              </PreviewBox>
              Preview
            </PreviewRow>
            <DialogActions>
              <PillButton $kind="fill">Copy</PillButton>
              <PillButton $kind="line" $ml={81}>
                Cancel
              </PillButton>
              <PillButton $kind="primary">OK</PillButton>
            </DialogActions>
          </DialogBody>
        </Dialog>
      </Window>
    </Page>
  );
};

export default App;
